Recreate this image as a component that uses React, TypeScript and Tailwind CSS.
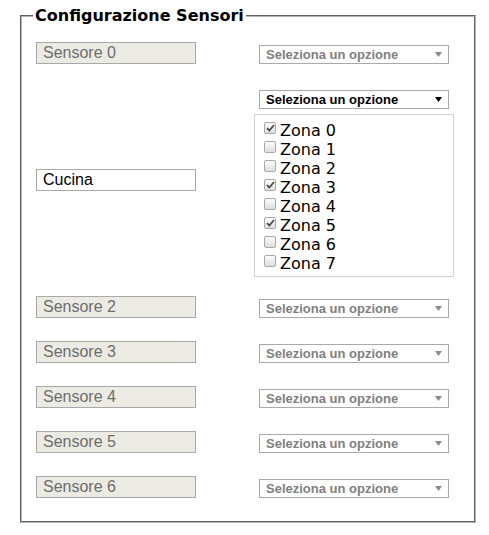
import React from "react";

const ZONES = [
  { name: "Zona 0", checked: true },
  { name: "Zona 1", checked: false },
  { name: "Zona 2", checked: false },
  { name: "Zona 3", checked: true },
  { name: "Zona 4", checked: false },
  { name: "Zona 5", checked: true },
  { name: "Zona 6", checked: false },
  { name: "Zona 7", checked: false },
];

const SENSORS_AFTER = ["Sensore 2", "Sensore 3", "Sensore 4", "Sensore 5", "Sensore 6"];

function SensorInput({ value, disabled = true }: { value: string; disabled?: boolean }) {
  return (
    <div
      className={
        "w-[160px] h-[22px] border flex items-center pl-[6px] text-[16px] leading-[18px] font-['Liberation_Sans',Arial,sans-serif] " +
        (disabled ? "bg-[#ebebe4] border-[#a9a9a9] text-[#6d6d6d]" : "bg-white border-[#a9a9a9] text-black")
      }
    >
      {value}
    </div>
  );
}

function FakeSelect({ disabled = true }: { disabled?: boolean }) {
  return (
    <div
      className={
        "mx-[5px] w-[190px] h-[19px] border border-[#a9a9a9] bg-white flex items-center justify-between pl-[6px] pr-[5px] text-[13px] leading-[15px] font-bold font-['Liberation_Sans',Arial,sans-serif] " +
        (disabled ? "text-[#808080]" : "text-black")
      }
    >
      <span>Seleziona un opzione</span>
      <svg width="7" height="5" viewBox="0 0 7 5" className="mr-[1px]">
        <path d="M0 0H7L3.5 5Z" fill={disabled ? "#8a8a8a" : "#000"} />
      </svg>
    </div>
  );
}

function Check({ checked }: { checked: boolean }) {
  return (
    <span className="mt-[1px] w-[12px] h-[12px] shrink-0 rounded-[2px] border border-[#a8a8a8] bg-gradient-to-b from-[#fbfbfb] to-[#dedede] flex items-center justify-center">
      {checked && (
        <svg width="9" height="8" viewBox="0 0 9 8">
          <path d="M1 4.2L3.4 6.5L8 1" stroke="#4a4a4a" strokeWidth="1.8" fill="none" />
        </svg>
      )}
    </span>
  );
}

export default function App() {
  return (
    <div className="w-[489px] h-[535px] bg-white pt-[6px]">
      <fieldset className="ml-[20px] w-[456px] border-2 [border-style:groove] border-[#b4b4b4] pl-[11px] pb-[23px]">
        <legend className="px-[2px] text-[16px] leading-[19px] font-bold text-black font-['DejaVu_Sans',Verdana,sans-serif]">
          Configurazione Sensori
        </legend>

        <div className="ml-[3px] flex flex-col">
          {/* riga sensore 0 */}
          <div className="mt-[17px] flex items-end">
            <SensorInput value="Sensore 0" />
            <div className="ml-[58px] w-[200px]">
              <FakeSelect />
            </div>
          </div>

          {/* riga sensore 1 con zone */}
          <div className="mt-[26px] flex items-start">
            <div className="mt-[79px]">
              <SensorInput value="Cucina" disabled={false} />
            </div>
            <div className="ml-[58px] w-[200px] flex flex-col">
              <FakeSelect disabled={false} />
              <div className="mt-[5px] h-[163px] border border-[#d3d3d3] pt-[6px] pl-[9px] font-['DejaVu_Sans',Verdana,sans-serif] text-[16px] leading-[19px] text-black">
                {ZONES.map((z) => (
                  <div key={z.name} className="flex items-start gap-[4px] h-[19px]">
                    <Check checked={z.checked} />
                    <span>{z.name}</span>
                  </div>
                ))}
              </div>
            </div>
          </div>

          {SENSORS_AFTER.map((s, i) => (
            <div key={s} className={"flex items-end " + (i === 0 ? "mt-[19px]" : "mt-[23px]")}>
              <SensorInput value={s} />
              <div className="ml-[58px] w-[200px]">
                <FakeSelect />
              </div>
            </div>
          ))}
        </div>
      </fieldset>
    </div>
  );
}
